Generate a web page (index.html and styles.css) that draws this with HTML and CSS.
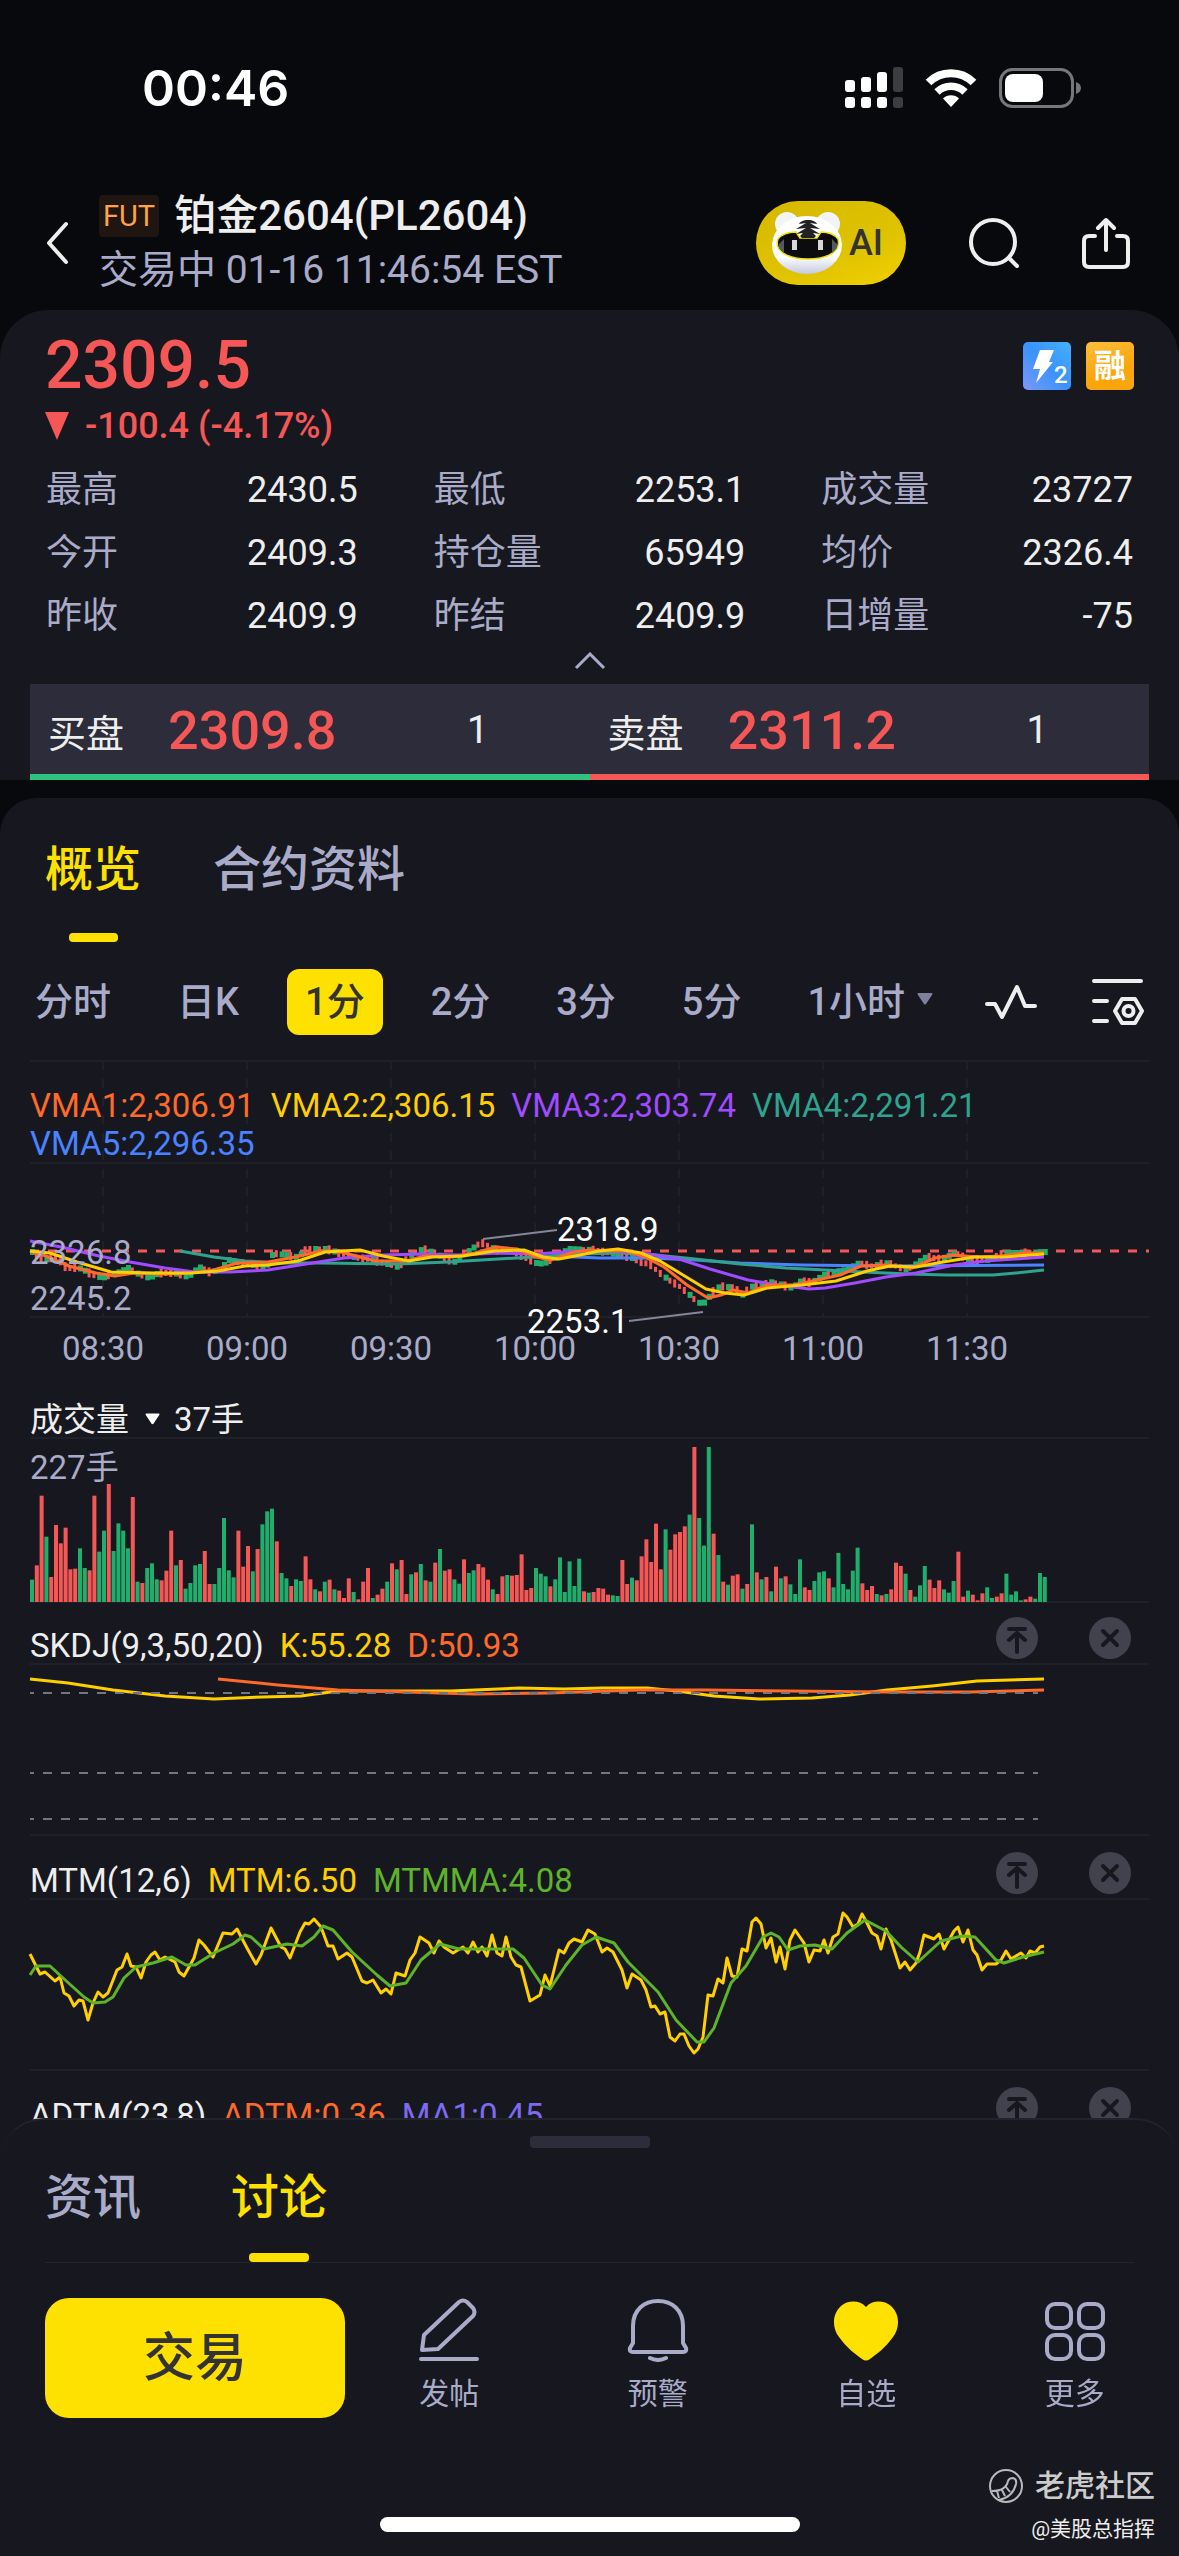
FILE: index.html
```html
<!DOCTYPE html>
<html lang="zh-CN">
<head>
<meta charset="UTF-8">
<meta name="viewport" content="width=device-width, initial-scale=1.0">
<title>铂金2604(PL2604)</title>
<link rel="stylesheet" href="styles.css">
</head>
<body>

<!-- 状态栏 -->
<div class="status-bar">
  <span class="clock">00:46</span>
  <div class="status-icons">
    <svg width="58" height="42" viewBox="0 0 58 42" fill="#fff">
      <rect x="0" y="13" width="10" height="12" rx="3"/><rect x="16" y="10" width="10" height="15" rx="3"/>
      <rect x="32" y="5" width="10" height="20" rx="3"/><rect x="48" y="0" width="10" height="25" rx="3" fill="#3d3d40"/>
      <rect x="0" y="30" width="10" height="11" rx="3"/><rect x="16" y="30" width="10" height="11" rx="3"/>
      <rect x="32" y="30" width="10" height="11" rx="3"/><rect x="48" y="30" width="10" height="11" rx="3" fill="#3d3d40"/>
    </svg>
    <svg width="52" height="38" viewBox="0 0 52 38" fill="none" stroke="#fff">
      <path d="M3.5 13.5a32 32 0 0 1 45 0" stroke-width="8"/>
      <path d="M12 23a20 20 0 0 1 28 0" stroke-width="7.5"/>
      <path d="M26 38l-8-8.500a11.500 11.500 0 0 1 16 0z" fill="#fff" stroke="none"/>
    </svg>
    <svg width="82" height="40" viewBox="0 0 82 40">
      <rect x="1.500" y="1.500" width="72" height="37" rx="12" fill="none" stroke="#77777b" stroke-width="3"/>
      <rect x="6" y="6" width="38" height="28" rx="8" fill="#fff"/>
      <path d="M77 14c3 1 5 3 5 6s-2 5-5 6z" fill="#77777b"/>
    </svg>
  </div>
</div>

<!-- 标题栏 -->
<header class="header">
  <button class="icon-btn back" aria-label="返回">
    <svg width="24" height="44" viewBox="0 0 24 44" fill="none" stroke="#eee" stroke-width="4" stroke-linecap="round" stroke-linejoin="round"><path d="M20 3L3 22l17 19"/></svg>
  </button>
  <div class="title-box">
    <h1 class="title"><span class="fut">FUT</span>铂金2604(PL2604)</h1>
    <div class="subtitle">交易中 01-16 11:46:54 EST</div>
  </div>
  <button class="ai-btn">
    <svg width="74" height="66" viewBox="0 0 74 66">
      <defs>
        <linearGradient id="face" x1="0" y1="0" x2="0" y2="1"><stop offset=".7" stop-color="#fff"/><stop offset="1" stop-color="#c3c9e0"/></linearGradient>
      </defs>
      <circle cx="15" cy="14" r="12" fill="#f3f4f8"/><circle cx="56" cy="14" r="12" fill="#f3f4f8"/>
      <ellipse cx="35" cy="35" rx="35" ry="29" fill="url(#face)"/>
      <path d="M6 29c4-5 10-7 18-7l4 6h17l4-6c8 0 13 2 17 7 3 11-8 20-30 20S2 40 6 29z" fill="#0c0b0e" stroke="#f3e100" stroke-width="1.500"/>
      <path d="M36 10c-5 0-8 2-9 4l7-1-10 6 10-1-10 6 7-1-3 3 2 2h12l2-2-3-3 7 1-10-6 10 1-10-6 7 1c-1-2-4-4-9-4z" fill="#222"/>
      <path d="M7 34l5-5v14l-5-5zM65 34l-5-5v14l5-5z" fill="#555a62"/>
      <rect x="20" y="30" width="5" height="10" fill="#d8d8d8"/><rect x="46" y="30" width="5" height="10" fill="#d8d8d8"/>
    </svg>
    <span>AI</span>
  </button>
  <button class="icon-btn search" aria-label="搜索">
    <svg width="52" height="52" viewBox="0 0 52 52" fill="none" stroke="#eee" stroke-width="4" stroke-linecap="round"><circle cx="25" cy="25" r="22"/><path d="M41 41l8 8"/></svg>
  </button>
  <button class="icon-btn share" aria-label="分享">
    <svg width="48" height="52" viewBox="0 0 48 52" fill="none" stroke="#eee" stroke-width="4" stroke-linecap="round" stroke-linejoin="round"><path d="M13 19H7q-5 0-5 5v21q0 5 5 5h34q5 0 5-5V24q0-5-5-5h-6M24 33V3M16 11l8-8 8 8"/></svg>
  </button>
</header>

<!-- 行情 -->
<section class="quote">
  <div class="quote-top">
    <div>
      <div class="price">2309.5</div>
      <div class="change"><svg width="24" height="28" viewBox="0 0 24 28"><path d="M0 0h24L12 28z" fill="#f55656"/></svg>-100.4 (-4.17%)</div>
    </div>
    <div class="badges">
      <svg width="48" height="48" viewBox="0 0 48 48">
        <defs><linearGradient id="blue" x1="1" y1="0" x2="0" y2="1"><stop offset="0" stop-color="#45b0fb"/><stop offset=".5" stop-color="#3a93fb"/><stop offset="1" stop-color="#7e97f8"/></linearGradient></defs>
        <rect width="48" height="48" rx="5" fill="url(#blue)"/>
        <path d="M17 8h14l-5 12h4L13 41l4-14h-7z" fill="#fff"/>
        <text x="31" y="41" font-size="24" font-weight="500" fill="#fff">2</text>
      </svg>
      <span class="rong">融</span>
    </div>
  </div>
  <dl class="stats">
    <div><dt>最高</dt><dd>2430.5</dd></div>
    <div><dt>最低</dt><dd>2253.1</dd></div>
    <div><dt>成交量</dt><dd>23727</dd></div>
    <div><dt>今开</dt><dd>2409.3</dd></div>
    <div><dt>持仓量</dt><dd>65949</dd></div>
    <div><dt>均价</dt><dd>2326.4</dd></div>
    <div><dt>昨收</dt><dd>2409.9</dd></div>
    <div><dt>昨结</dt><dd>2409.9</dd></div>
    <div><dt>日增量</dt><dd>-75</dd></div>
  </dl>
  <button class="collapse" aria-label="收起">
    <svg width="32" height="18" viewBox="0 0 32 18" fill="none" stroke="#a9abc9" stroke-width="3"><path d="M2 16L16 2l14 14"/></svg>
  </button>
  <div class="book">
    <div class="bid"><span>买盘</span><b>2309.8</b><span>1</span></div>
    <div class="ask"><span>卖盘</span><b>2311.2</b><span>1</span></div>
  </div>
</section>

<!-- 图表 -->
<main class="panel">
  <nav class="tabs">
    <button class="tab active">概览</button>
    <button class="tab">合约资料</button>
  </nav>
  <div class="periods">
    <button>分时</button>
    <button>日K</button>
    <button class="on">1分</button>
    <button>2分</button>
    <button>3分</button>
    <button>5分</button>
    <button class="more-period">1小时<svg width="16" height="12" viewBox="0 0 16 12"><path d="M1 0h14q1 1 0 2L9 11q-1 1-2 0L1 2Q0 1 1 0z" fill="#7f819a"/></svg></button>
    <div class="tools">
      <button class="icon-btn" aria-label="指标"><svg width="52" height="36" viewBox="0 0 52 36" fill="none" stroke="#eee" stroke-width="4" stroke-linecap="round" stroke-linejoin="round"><path d="M2 20h8l7 13L32 3l8 19h10"/></svg></button>
      <button class="icon-btn" aria-label="设置"><svg width="52" height="48" viewBox="0 0 52 48" fill="none" stroke="#eee" stroke-width="4" stroke-linecap="round" stroke-linejoin="round"><path d="M2 3h47M2 23h13M2 43h13"/><path d="M30 21h13l7 12-7 12H30l-7-12z"/><circle cx="36.500" cy="33" r="5"/></svg></button>
    </div>
  </div>

  <div class="chart">
    <div class="legend">
      <span class="c-orange">VMA1:2,306.91</span>
      <span class="c-yellow">VMA2:2,306.15</span>
      <span class="c-purple">VMA3:2,303.74</span>
      <span class="c-teal">VMA4:2,291.21</span>
      <span class="c-blue">VMA5:2,296.35</span>
    </div>
    <svg id="priceChart" viewBox="0 0 1119 313"></svg>
  </div>

  <div class="sub-head">
    <span>成交量</span>
    <svg class="caret" width="15" height="12" viewBox="0 0 16 12"><path d="M1 0h14q1 1 0 2L9 11q-1 1-2 0L1 2Q0 1 1 0z" fill="#fff"/></svg>
    <span>37手</span>
  </div>
  <div class="chart">
    <svg id="volumeChart" viewBox="0 0 1119 162"></svg>
  </div>

  <div class="sub-head">
    <span>SKDJ(9,3,50,20)</span><span class="c-yellow">K:55.28</span><span class="c-orange">D:50.93</span>
    <div class="sub-tools">
      <button class="icon-btn" aria-label="置顶"><svg width="42" height="42"><use href="#toTop"/></svg></button>
      <button class="icon-btn" aria-label="关闭"><svg width="42" height="42"><use href="#close"/></svg></button>
    </div>
  </div>
  <div class="chart">
    <svg id="skdjChart" viewBox="0 0 1119 171"></svg>
  </div>

  <div class="sub-head">
    <span>MTM(12,6)</span><span class="c-yellow">MTM:6.50</span><span class="c-green">MTMMA:4.08</span>
    <div class="sub-tools">
      <button class="icon-btn" aria-label="置顶"><svg width="42" height="42"><use href="#toTop"/></svg></button>
      <button class="icon-btn" aria-label="关闭"><svg width="42" height="42"><use href="#close"/></svg></button>
    </div>
  </div>
  <div class="chart">
    <svg id="mtmChart" viewBox="0 0 1119 171"></svg>
  </div>

  <div class="sub-head">
    <span>ADTM(23,8)</span><span class="c-orange">ADTM:0.36</span><span class="c-violet">MA1:0.45</span>
    <div class="sub-tools">
      <button class="icon-btn" aria-label="置顶"><svg width="42" height="42"><use href="#toTop"/></svg></button>
      <button class="icon-btn" aria-label="关闭"><svg width="42" height="42"><use href="#close"/></svg></button>
    </div>
  </div>
</main>

<!-- 底部面板 -->
<footer class="sheet">
  <div class="handle"></div>
  <nav class="tabs sheet-tabs">
    <button class="tab">资讯</button>
    <button class="tab active">讨论</button>
  </nav>
  <div class="actions">
    <button class="trade">交易</button>
    <button class="action">
      <svg width="64" height="64" viewBox="0 0 64 64" fill="none" stroke="#a9abc9" stroke-width="4" stroke-linecap="round" stroke-linejoin="round"><path d="M5 52l2-15L42 4q4-3 8 0l6 6q3 4 0 8L21 51zM4 61h56"/></svg>
      <span>发帖</span>
    </button>
    <button class="action">
      <svg width="64" height="64" viewBox="0 0 64 64" fill="none" stroke="#a9abc9" stroke-width="4" stroke-linecap="round" stroke-linejoin="round"><path d="M7 28C7 12 18 3 32 3s25 9 25 25v17l3 5q1 4-3 4H7q-4 0-3-4l3-5zM24 60q8 4 16 0"/></svg>
      <span>预警</span>
    </button>
    <button class="action">
      <svg width="66" height="64" viewBox="0 0 66 64"><path d="M33 9C27 2 15 2 8 8c-9 8-9 22-2 31 7 10 16 17 23 22q4 3 8 0c7-5 16-12 23-22 7-9 7-23-2-31C51 2 39 2 33 9z" fill="#ffe100"/></svg>
      <span>自选</span>
    </button>
    <button class="action">
      <svg width="64" height="64" viewBox="0 0 64 64" fill="none" stroke="#a9abc9" stroke-width="4"><rect x="4" y="6" width="24" height="24" rx="8"/><rect x="36" y="6" width="24" height="24" rx="8"/><rect x="4" y="37" width="24" height="24" rx="8"/><rect x="36" y="37" width="24" height="24" rx="8"/></svg>
      <span>更多</span>
    </button>
  </div>
  <div class="home-bar"></div>
  <div class="watermark">
    <div class="community">
      <svg width="34" height="34" viewBox="0 0 34 34" fill="none" stroke="#b9b9bd" stroke-width="2"><circle cx="17" cy="17" r="16"/><path d="M3 22q14 0 16-10 1-3 5-3 4 1 3 6-3 13-17 16M8 22l2 7M13 21l3 6M17 18l4 5"/></svg>
      老虎社区
    </div>
    <div class="author">@美股总指挥</div>
  </div>
</footer>

<!-- 图标 -->
<svg class="symbols">
  <symbol id="toTop" viewBox="0 0 42 42"><circle cx="21" cy="21" r="21" fill="#42424f"/><path d="M13 12h16M21 35V17M13 23l8-7 8 7" fill="none" stroke="#17181f" stroke-width="4" stroke-linecap="round"/></symbol>
  <symbol id="close" viewBox="0 0 42 42"><circle cx="21" cy="21" r="21" fill="#42424f"/><path d="M14 14l14 14M28 14L14 28" fill="none" stroke="#17181f" stroke-width="4" stroke-linecap="round"/></symbol>
</svg>

<script src="chart.js"></script>
</body>
</html>
```
FILE: styles.css
```css
* {
  box-sizing: border-box;
}

body {
  margin: 0;
  background: #08090c;
  color: #eee;
  font-family: Roboto, "Noto Sans CJK SC", sans-serif;
}

button {
  padding: 0;
  border: none;
  background: none;
  color: inherit;
  font: inherit;
  cursor: pointer;
}

svg {
  display: block;
}

.symbols {
  display: none;
}

.icon-btn {
  flex: none;
}

/* 状态栏 */
.status-bar {
  display: flex;
  align-items: center;
  justify-content: space-between;
  height: 176px;
  padding: 0 98px 0 142px;
}

.clock {
  color: #fff;
  font-family: Inter, sans-serif;
  font-size: 50px;
  font-weight: 600;
}

.status-icons {
  display: flex;
  align-items: center;
  gap: 22px;
}

/* 标题栏 */
.header {
  display: flex;
  align-items: center;
  height: 134px;
  padding: 0 49px 0 46px;
}

.title-box {
  flex: 1;
  margin-left: 29px;
  white-space: nowrap;
}

.title {
  display: flex;
  align-items: center;
  margin: 0;
  font-size: 42px;
  font-weight: 500;
  line-height: 55px;
}

.fut {
  margin-right: 15px;
  padding: 0 4px;
  border-radius: 4px;
  background: #1f1611;
  color: #ffa24b;
  font-size: 29px;
  font-weight: 400;
  line-height: 42px;
}

.subtitle {
  color: #a9abc9;
  font-size: 39px;
  line-height: 55px;
}

.ai-btn {
  display: flex;
  align-items: center;
  width: 150px;
  height: 84px;
  padding-left: 16px;
  border-radius: 42px;
  background: linear-gradient(160deg, #d6b800, #dfc300 60%, #f0d000);
  color: #333;
  font-size: 36px;
  font-weight: 500;
}

.ai-btn span {
  margin-left: 3px;
}

.search,
.share {
  margin-left: 62px;
}

/* 行情 */
.quote {
  padding-top: 24px;
  border-radius: 48px 48px 0 0;
  background: #17181f;
}

.quote-top {
  display: flex;
  justify-content: space-between;
  padding: 0 45px;
}

.price {
  color: #f55656;
  font-size: 66px;
  font-weight: 500;
  line-height: 64px;
}

.change {
  display: flex;
  align-items: center;
  gap: 16px;
  margin-top: 6px;
  color: #f55656;
  font-size: 36px;
  font-weight: 500;
  line-height: 44px;
}

.badges {
  display: flex;
  gap: 15px;
  margin-top: 8px;
}

.rong {
  width: 48px;
  height: 48px;
  border-radius: 5px;
  background: linear-gradient(160deg, #fcbf3c, #fba50c 60%);
  color: #fff;
  font-size: 32px;
  font-weight: 700;
  line-height: 48px;
  text-align: center;
}

.stats {
  display: grid;
  grid-template-columns: repeat(3, 1fr);
  column-gap: 76px;
  margin: 11px 0 0;
  padding: 0 46px;
  font-size: 36px;
  line-height: 63px;
}

.stats div {
  display: flex;
  justify-content: space-between;
}

.stats dt {
  color: #a9abc9;
}

.stats dd {
  margin: 0;
}

.collapse {
  display: flex;
  justify-content: center;
  width: 100%;
  height: 36px;
  padding-top: 4px;
}

.book {
  display: grid;
  grid-template-columns: 1fr 1fr;
  margin: 0 30px;
  background: #2c2c3a;
}

.bid,
.ask {
  display: grid;
  grid-template-columns: 120px 299px auto;
  align-items: center;
  height: 96px;
  padding: 2px 18px 0;
  border-bottom: 6px solid #2ec27e;
  font-size: 38px;
}

.ask {
  border-color: #f55656;
}

.book b {
  color: #f55656;
  font-size: 54px;
  font-weight: 500;
}

/* 图表面板 */
.panel {
  margin-top: 18px;
  padding: 42px 0 60px;
  border-radius: 36px 36px 0 0;
  background: #17181f;
}

.tabs {
  display: flex;
  align-items: flex-start;
  gap: 72px;
  padding: 0 45px;
}

.tab {
  color: #a9abc9;
  font-size: 48px;
  font-weight: 500;
  line-height: 60px;
}

.tab.active {
  color: #ffe100;
}

.tab.active::after {
  content: "";
  display: block;
  width: 49px;
  height: 9px;
  margin: 33px auto 0;
  border-radius: 4px;
  background: #ffe100;
}

.periods {
  display: flex;
  align-items: center;
  gap: 30px;
  margin-top: 27px;
  padding: 0 35px 0 17px;
}

.periods > button {
  height: 66px;
  padding: 0 18px 7px;
  border-radius: 12px;
  color: #a9abc9;
  font-size: 38px;
  font-weight: 500;
  white-space: nowrap;
}

.periods > .on {
  background: #ffe100;
  color: #333;
}

.periods > .more-period {
  display: flex;
  align-items: center;
  gap: 12px;
}

.tools {
  display: flex;
  align-items: center;
  gap: 55px;
  margin-left: auto;
}

.chart {
  position: relative;
  padding: 0 30px;
}

.periods + .chart {
  margin-top: 26px;
}

.chart svg {
  width: 100%;
  height: auto;
  overflow: visible;
}

.legend {
  position: absolute;
  top: 26px;
  left: 30px;
  right: 120px;
  display: flex;
  flex-wrap: wrap;
  column-gap: 16px;
  font-size: 33px;
  line-height: 38px;
}

.sub-head {
  display: flex;
  align-items: flex-end;
  gap: 16px;
  height: 64px;
  padding: 0 30px;
  font-size: 33px;
  line-height: 36px;
}

.sub-head .caret {
  margin: 0 -2px 13px 0;
}

.sub-tools {
  display: flex;
  gap: 51px;
  margin-left: auto;
  padding: 0 18px 5px 0;
}

.c-orange { color: #ff6a2b; }
.c-yellow { color: #ffcf00; }
.c-purple { color: #a04bff; }
.c-teal { color: #2fa38f; }
.c-blue { color: #4a82ff; }
.c-green { color: #5fb32a; }
.c-violet { color: #7c6af0; }

/* svg */
.grid {
  fill: none;
  stroke: #1f2028;
  stroke-width: 2;
}

.grid-v {
  stroke-dasharray: 9 9;
}

.level {
  stroke: #74757f;
  stroke-width: 2;
  stroke-dasharray: 9 9;
  stroke-dashoffset: 5;
}

.last-price {
  stroke: #f55656;
  stroke-width: 3;
  stroke-dasharray: 9 9;
}

.line {
  fill: none;
  stroke: currentColor;
  stroke-width: 3;
  stroke-linejoin: round;
}

.pointer {
  stroke: #85869a;
  stroke-width: 2;
}

.up { fill: #1fae6b; }
.down { fill: #f55656; }

.scale {
  fill: #a9abc9;
  font-size: 33px;
}

.mark {
  fill: #fff;
  font-size: 33px;
}

/* 底部面板 */
.sheet {
  position: fixed;
  left: 0;
  right: 0;
  bottom: 0;
  padding: 16px 0 24px;
  border-top: 2px solid #22232b;
  border-radius: 44px 44px 0 0;
  background: #17181f;
}

.handle {
  width: 120px;
  height: 12px;
  margin: 0 auto;
  border-radius: 4px;
  background: #2c2c3a;
}

.sheet-tabs {
  gap: 90px;
  margin: 20px 45px 0;
  padding: 0;
  border-bottom: 1px solid #22232b;
}

.sheet-tabs .tab.active::after {
  width: 60px;
  margin-top: 25px;
}

.actions {
  display: flex;
  margin-top: 35px;
  padding-left: 45px;
}

.trade {
  width: 300px;
  height: 120px;
  padding-bottom: 9px;
  border-radius: 24px;
  background: #ffe100;
  color: #333;
  font-size: 52px;
  font-weight: 500;
}

.action {
  display: flex;
  flex: 1;
  flex-direction: column;
  align-items: center;
  color: #a9abc9;
  font-size: 30px;
  line-height: 40px;
}

.action span {
  margin-top: 12px;
}

.home-bar {
  width: 420px;
  height: 15px;
  margin: 99px auto 0;
  border-radius: 8px;
  background: #fff;
}

.watermark {
  position: absolute;
  right: 24px;
  bottom: 10px;
  text-align: right;
}

.community {
  display: flex;
  align-items: center;
  gap: 12px;
  color: #ccc;
  font-size: 30px;
  font-weight: 500;
  line-height: 44px;
}

.author {
  margin-top: 4px;
  color: #eee;
  font-size: 21px;
  line-height: 34px;
}
```
FILE: chart.js
```js
// 每分钟一根柱，间距 4.8
var STEP = 4.8;

// 成交量：g 涨 r 跌
var volumes = ('g67 r110 r319 g196 r75 r231 r176 r223 r98 r100 g161 g102 r95 r319 g151 g214 r354 g153 g236 g214 g161 r315 g61 r57 g102 g116 g68 r65 r94 r214 ' +
  'g110 r126 g40 g57 g110 g114 r153 r54 g54 g102 g252 g95 g74 r214 r106 r168 g92 r159 g233 g272 g280 r182 g87 g71 r48 g68 g63 r137 r68 g38 ' +
  'r32 g61 r67 g38 r34 r12 r71 g30 r8 r61 r102 g12 r22 r40 g61 r116 g98 r126 r24 g83 r89 g114 r65 g61 r118 g159 r94 r98 g68 g55 ' +
  'r128 g87 g95 r114 r104 r67 g38 r24 r77 g81 r79 r81 r143 r36 r42 g102 g85 g77 r47 g68 g134 g30 g122 g48 g130 r32 g28 r30 r42 r40 ' +
  'r22 g20 g18 r126 r54 g73 r65 r137 r188 r120 r235 r98 g218 r157 r203 r210 r227 g262 r465 g252 g169 g465 r205 g141 r61 g52 r79 r83 g40 r54 ' +
  'g233 r89 g68 r75 g32 r106 g71 r77 g53 g24 g128 r44 r36 g63 g89 g92 r71 g44 g147 g54 g38 g94 g163 r56 r36 r48 g24 r20 g24 r38 ' +
  'r118 r108 g85 r36 g16 g50 g108 r67 r42 r65 g38 g28 g63 r151 r16 g34 r22 r5 r26 g44 g12 r16 r26 g85 g22 g32 g5 r8 r16 g10 g87 g75').split(' ');

// 价格走势
var path = [[0,191],[12,199],[24,196],[35,207],[47,207],[62,214],[70,217],[85,212],[96,207],[104,212],[117,217],[127,212],[142,212],[156,216],[167,206],[177,211],[188,209],[196,199],[215,203],[234,206],[241,192],[253,194],[265,196],[276,188],[295,188],[307,192],[322,196],[341,199],[366,206],[379,194],[391,188],[402,192],[422,201],[445,184],[452,182],[464,189],[483,191],[506,203],[517,201],[536,188],[560,189],[573,191],[600,197],[619,204],[634,217],[649,226],[661,237],[670,244],[680,232],[688,225],[703,227],[710,234],[722,224],[741,221],[760,227],[770,219],[779,222],[795,212],[814,209],[827,202],[840,205],[856,202],[875,209],[894,196],[909,198],[924,192],[936,198],[955,199],[974,192],[993,192],[1014,191]];

var vma1 = '0,190 16,195 39,205 66,212 85,215 104,212 135,213 161,212 184,209 207,202 238,201 265,196 291,190 307,190 330,196 345,200 376,200 395,195 422,196 445,192 466,186 487,188 506,196 521,199 544,191 560,189 573,190 596,190 615,196 634,206 657,224 678,237 691,234 703,229 718,232 737,224 764,224 787,219 810,214 831,205 856,204 882,207 905,197 924,194 947,196 970,195 993,192 1014,192';
var vma2 = '0,190 20,192 47,201 81,211 123,212 161,212 188,210 215,205 238,204 268,200 295,191 330,189 353,195 379,200 402,196 433,195 464,190 494,189 513,196 529,198 550,194 569,190 588,188 611,192 630,200 653,214 676,228 695,232 714,234 737,227 772,224 806,220 837,210 860,205 886,206 913,201 944,196 974,196 1014,193';
var vma3 = '0,180 31,186 69,195 100,201 135,207 165,211 200,211 238,209 276,203 314,197 353,194 391,193 429,194 468,192 506,193 550,190 581,190 619,193 649,198 680,208 718,219 741,223 779,228 795,227 825,222 856,216 886,212 924,204 955,200 1014,196';
var vma4 = '150,190 184,196 215,200 253,202 288,202 368,203 418,201 468,198 506,196 550,193 588,192 626,194 665,198 710,203 756,207 795,209 833,211 879,213 917,214 963,214 986,212 1014,209';
var vma5 = '521,195 570,197 620,197 665,199 710,202 772,204 856,205 1014,204';

var skdjK = '0,15 38,19 83,26 135,32 184,35 233,33 271,32 308,27 421,27 489,24 534,25 572,24 617,24 647,27 684,32 729,35 782,34 820,31 857,26 902,22 947,17 1014,15';
var skdjD = '188,15 248,21 308,26 376,28 444,30 519,29 609,26 677,26 759,27 857,28 940,28 1014,26';

var mtm = '0,55 10,75 15,73 25,82 30,78 34,94 39,97 44,107 49,101 53,102 58,121 63,104 68,93 73,98 78,94 87,71 92,68 97,55 101,67 106,68 111,79 116,63 121,56 125,53 130,61 135,58 145,63 149,73 154,77 164,59 169,41 174,46 183,58 193,34 202,35 207,30 217,49 226,65 231,56 241,29 251,48 255,50 260,59 270,33 275,24 279,25 284,20 291,28 298,47 303,47 308,60 317,54 322,58 332,82 337,84 343,81 351,94 356,90 361,95 366,74 375,77 380,61 385,54 390,38 399,44 404,54 409,42 414,48 423,54 433,48 438,54 443,43 448,53 452,48 457,57 462,36 467,54 472,57 476,38 481,58 486,66 491,68 500,102 510,96 515,76 520,87 529,51 534,54 539,44 544,40 552,43 558,31 565,35 572,53 577,49 583,53 588,63 592,71 597,89 602,75 611,81 616,91 621,108 625,107 630,115 635,113 640,138 645,142 650,135 654,135 659,147 664,154 668,150 673,138 678,96 683,97 688,80 693,84 697,59 702,77 707,78 712,50 717,52 722,23 726,19 731,25 736,49 741,39 746,63 750,48 755,70 760,41 765,31 774,44 779,63 784,51 790,52 794,41 798,54 803,38 808,35 813,14 817,18 823,28 828,25 832,15 837,24 842,34 847,37 851,50 856,30 861,41 870,69 875,63 880,71 886,64 890,53 894,36 904,40 909,35 914,50 924,32 928,28 933,43 938,31 943,51 947,56 952,71 957,65 966,65 971,61 976,52 981,60 991,54 996,59 1000,52 1005,54 1010,48 1014,47';
var mtmMa = '0,76 6,67 20,67 33,79 54,98 63,104 75,103 83,98 94,79 106,68 123,64 142,58 156,66 165,66 184,54 203,45 215,36 221,38 234,50 257,45 272,47 284,38 293,27 303,31 322,53 347,76 360,87 376,84 391,61 410,45 429,50 468,50 483,50 494,59 512,86 520,90 536,66 552,46 566,38 584,44 598,63 628,93 646,121 667,143 674,143 684,129 701,84 716,67 733,38 741,34 749,38 758,51 770,47 785,46 802,50 817,34 835,21 856,32 871,48 888,63 911,42 932,37 945,38 966,61 974,64 993,58 1014,53';

function line(points, cls) {
  return '<polyline class="line ' + cls + '" points="' + points + '"/>';
}

function hline(y, cls, end) {
  return '<path class="' + cls + '" d="M0 ' + y + 'H' + (end || 1119) + '"/>';
}

function text(x, y, str, cls, anchor) {
  return '<text class="' + cls + '" x="' + x + '" y="' + y + '" text-anchor="' + (anchor || 'start') + '">' + str + '</text>';
}

function priceAt(x) {
  for (var i = 1; i < path.length; i++) {
    if (x <= path[i][0]) {
      var a = path[i - 1], b = path[i];
      return a[1] + (b[1] - a[1]) * (x - a[0]) / (b[0] - a[0]);
    }
  }
  return path[path.length - 1][1];
}

// K线
function drawPrice() {
  var html = hline(0, 'grid') + hline(102, 'grid') + hline(256, 'grid');
  var times = ['08:30', '09:00', '09:30', '10:00', '10:30', '11:00', '11:30'];
  times.forEach(function (t, i) {
    var x = 73 + i * 144;
    html += '<path class="grid grid-v" d="M' + x + ' 0V256"/>' + text(x, 299, t, 'scale', 'middle');
  });
  html += hline(190, 'last-price');
  volumes.forEach(function (v, i) {
    var x = i * STEP;
    var up = v[0] == 'g';
    var h = up ? 6 : 5 + i * 7 % 5;
    html += '<rect class="' + (up ? 'up' : 'down') + '" x="' + x + '" y="' + (priceAt(x) - h / 2) + '" width="' + (up ? 5 : 3) + '" height="' + h + '"/>';
  });
  html += line(vma5, 'c-blue') + line(vma4, 'c-teal') + line(vma3, 'c-purple') + line(vma1, 'c-orange') + line(vma2, 'c-yellow');
  html += text(0, 203, '2326.8', 'scale') + text(0, 249, '2245.2', 'scale');
  html += '<path class="pointer" d="M453 178L527 169M599 260L673 251"/>';
  html += text(527, 180, '2318.9', 'mark') + text(497, 272, '2253.1', 'mark');
  document.getElementById('priceChart').innerHTML = html;
}

// 成交量
function drawVolume() {
  var html = hline(0, 'grid') + hline(164, 'grid');
  volumes.forEach(function (v, i) {
    var h = v.slice(1) / 3;
    html += '<rect class="' + (v[0] == 'g' ? 'up' : 'down') + '" x="' + i * STEP + '" y="' + (164 - h) + '" width="4" height="' + h + '"/>';
  });
  html += text(0, 41, '227手', 'scale');
  document.getElementById('volumeChart').innerHTML = html;
}

drawPrice();
drawVolume();
document.getElementById('skdjChart').innerHTML = hline(0, 'grid') + hline(171, 'grid') +
  line(skdjK, 'c-yellow') + line(skdjD, 'c-orange') +
  hline(29, 'level', 1008) + hline(109, 'level', 1008) + hline(155, 'level', 1008);
document.getElementById('mtmChart').innerHTML = hline(0, 'grid') + hline(171, 'grid') +
  line(mtm, 'c-yellow') + line(mtmMa, 'c-green');
```
